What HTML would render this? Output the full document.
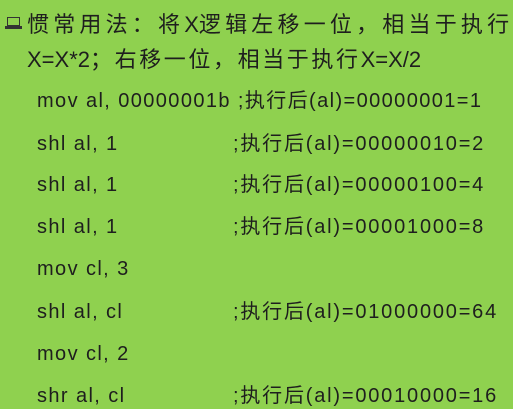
<!DOCTYPE html>
<html><head><meta charset="utf-8"><style>
body{margin:0;width:513px;height:409px;background:#8fd14f;overflow:hidden;font-family:"Liberation Sans","Noto Sans CJK SC",sans-serif;color:#1e1e1e;position:relative}
.t{position:absolute;font-size:22px;letter-spacing:4.2px;white-space:nowrap;line-height:1}
.t2{letter-spacing:2.6px}
.t b{font-weight:normal;letter-spacing:0}
.c{position:absolute;font-size:20px;letter-spacing:1.4px;white-space:nowrap;line-height:1}
.m{letter-spacing:1.8px}
.icon{position:absolute;left:7px;top:17px;width:13px;height:9px;border:1.5px solid #333;box-sizing:border-box}
.icon2{position:absolute;left:5px;top:26px;width:17px;height:3px;background:#333}
</style></head><body>
<div class="icon"></div><div class="icon2"></div>
<div class="t" style="left:27px;top:14px">惯常用法：将<b>X</b>逻辑左移一位，相当于执行</div>
<div class="t t2" style="left:27px;top:49px"><b>X=X*2</b>；右移一位，相当于执行<b>X=X/2</b></div>
<div class="c" style="left:37px;top:91px">mov al, 00000001b ;执行后(al)=00000001=1</div>
<div class="c" style="left:37px;top:134px">shl al, 1</div><div class="c m" style="left:233px;top:134px">;执行后(al)=00000010=2</div>
<div class="c" style="left:37px;top:175px">shl al, 1</div><div class="c m" style="left:233px;top:175px">;执行后(al)=00000100=4</div>
<div class="c" style="left:37px;top:217px">shl al, 1</div><div class="c m" style="left:233px;top:217px">;执行后(al)=00001000=8</div>
<div class="c" style="left:37px;top:259px">mov cl, 3</div>
<div class="c" style="left:37px;top:302px">shl al, cl</div><div class="c m" style="left:233px;top:302px">;执行后(al)=01000000=64</div>
<div class="c" style="left:37px;top:344px">mov cl, 2</div>
<div class="c" style="left:37px;top:386px">shr al, cl</div><div class="c m" style="left:233px;top:386px">;执行后(al)=00010000=16</div>
</body></html>
